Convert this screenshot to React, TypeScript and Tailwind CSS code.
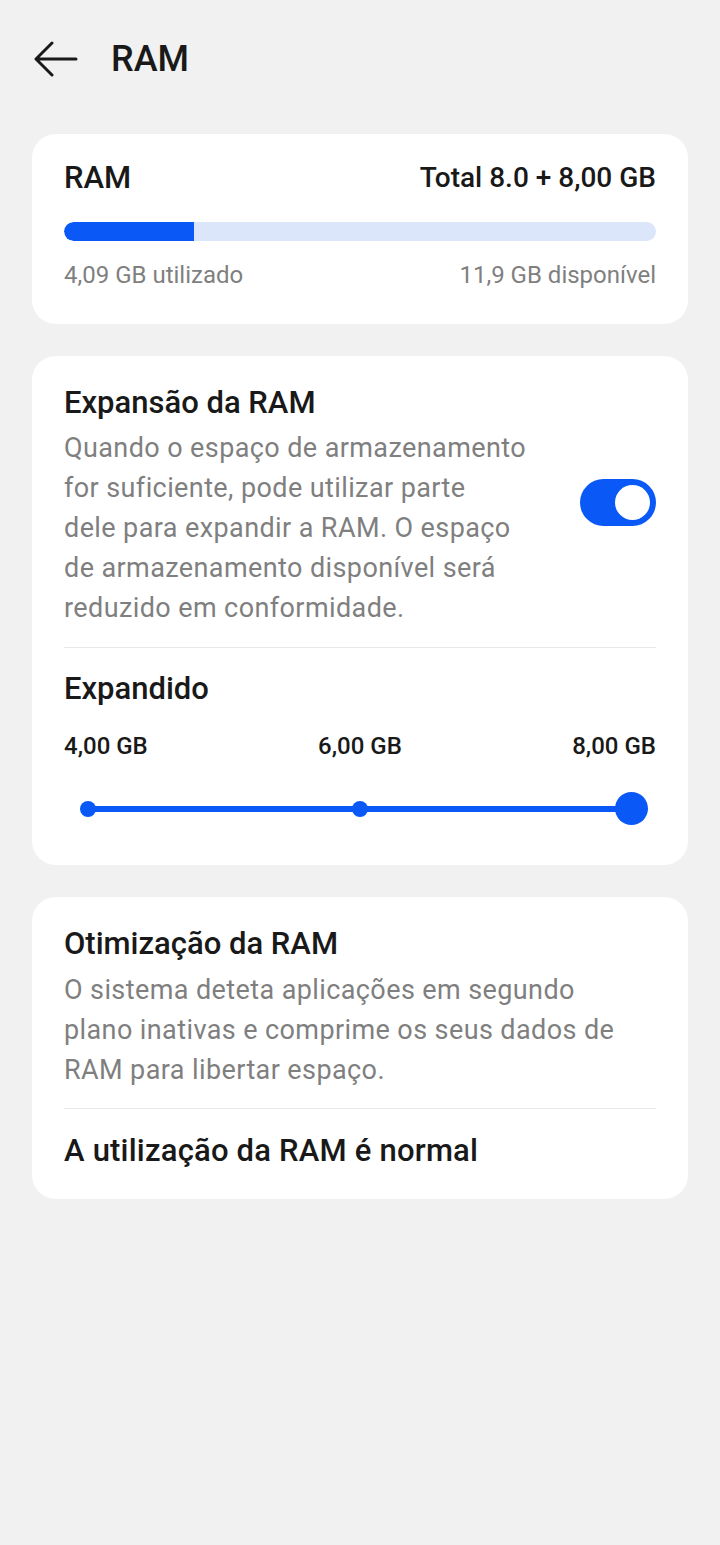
const font = { fontFamily: "Roboto, 'Noto Sans', sans-serif" };

function BackArrow() {
  return (
    <svg width="44" height="36" viewBox="0 0 44 36" fill="none" className="shrink-0">
      <path
        d="M42 18H3M18 2L2 18l16 16"
        stroke="#191919"
        strokeWidth="3"
        strokeLinecap="round"
        strokeLinejoin="round"
      />
    </svg>
  );
}

function Toggle() {
  return (
    <div className="mb-[6px] w-[76px] h-[47px] rounded-full bg-[#0a59f7] flex items-center justify-end pr-[6px] shrink-0">
      <div className="w-[35px] h-[35px] rounded-full bg-white" />
    </div>
  );
}

function Slider() {
  return (
    <div className="relative h-[34px] mt-[30px] mx-[8px]">
      <div className="absolute left-[16px] right-[16px] top-[14px] h-[6px] rounded-full bg-[#0a59f7]" />
      <div className="absolute left-[8px] top-[9px] w-[16px] h-[16px] rounded-full bg-[#0a59f7]" />
      <div className="absolute left-[280px] top-[9px] w-[16px] h-[16px] rounded-full bg-[#0a59f7]" />
      <div className="absolute right-0 top-0 w-[33px] h-[33px] rounded-full bg-[#0a59f7]" />
    </div>
  );
}

export default function App() {
  return (
    <div className="min-h-[1545px] bg-[#f1f1f1] text-[#191919]" style={font}>
      <header className="flex items-center h-[118px] pl-[34px]">
        <BackArrow />
        <h1 className="ml-[33px] text-[36px] leading-none font-medium">RAM</h1>
      </header>

      <div className="px-[32px] pt-[16px] flex flex-col gap-[32px]">
        {/* Resumo RAM */}
        <section className="bg-white rounded-[24px] px-[32px] pt-[24px] pb-[33px]">
          <div className="flex justify-between items-center h-[40px]">
            <span className="text-[31px] font-medium">RAM</span>
            <span className="text-[28px] font-medium">Total 8.0 + 8,00 GB</span>
          </div>
          <div className="mt-[24px] h-[19px] rounded-full bg-[#dbe6fb] overflow-hidden">
            <div className="h-full w-[130px] bg-[#0a59f7] rounded-l-full" />
          </div>
          <div className="mt-[18px] flex justify-between text-[24px] leading-[32px] text-[#7f7f7f]">
            <span>4,09 GB utilizado</span>
            <span>11,9 GB disponível</span>
          </div>
        </section>

        {/* Expansão */}
        <section className="bg-white rounded-[24px] px-[32px] pt-[27px] pb-[39px]">
          <div className="flex items-center justify-between pb-[19px] border-b border-[#e8e8e8]">
            <div className="whitespace-nowrap">
              <h2 className="text-[31px] font-medium leading-[40px]">Expansão da RAM</h2>
              <p className="mt-[5px] text-[27px] tracking-[0.4px] leading-[40px] text-[#7f7f7f]">
                Quando o espaço de armazenamento
                <br />
                for suficiente, pode utilizar parte
                <br />
                dele para expandir a RAM. O espaço
                <br />
                de armazenamento disponível será
                <br />
                reduzido em conformidade.
              </p>
            </div>
            <Toggle />
          </div>
          <h2 className="mt-[21px] text-[31px] font-medium leading-[40px]">Expandido</h2>
          <div className="mt-[21px] flex justify-between text-[24px] leading-[32px] font-medium">
            <span>4,00 GB</span>
            <span>6,00 GB</span>
            <span>8,00 GB</span>
          </div>
          <Slider />
        </section>

        {/* Otimização */}
        <section className="bg-white rounded-[24px] px-[32px] pt-[27px]">
          <div className="pb-[18px] border-b border-[#e8e8e8] whitespace-nowrap">
            <h2 className="text-[31px] font-medium leading-[40px]">Otimização da RAM</h2>
            <p className="mt-[6px] text-[27px] tracking-[0.4px] leading-[40px] text-[#7f7f7f]">
              O sistema deteta aplicações em segundo
              <br />
              plano inativas e comprime os seus dados de
              <br />
              RAM para libertar espaço.
            </p>
          </div>
          <div className="h-[90px] pb-[6px] flex items-center text-[31px] tracking-[0.2px] font-medium">
            A utilização da RAM é normal
          </div>
        </section>
      </div>
    </div>
  );
}
